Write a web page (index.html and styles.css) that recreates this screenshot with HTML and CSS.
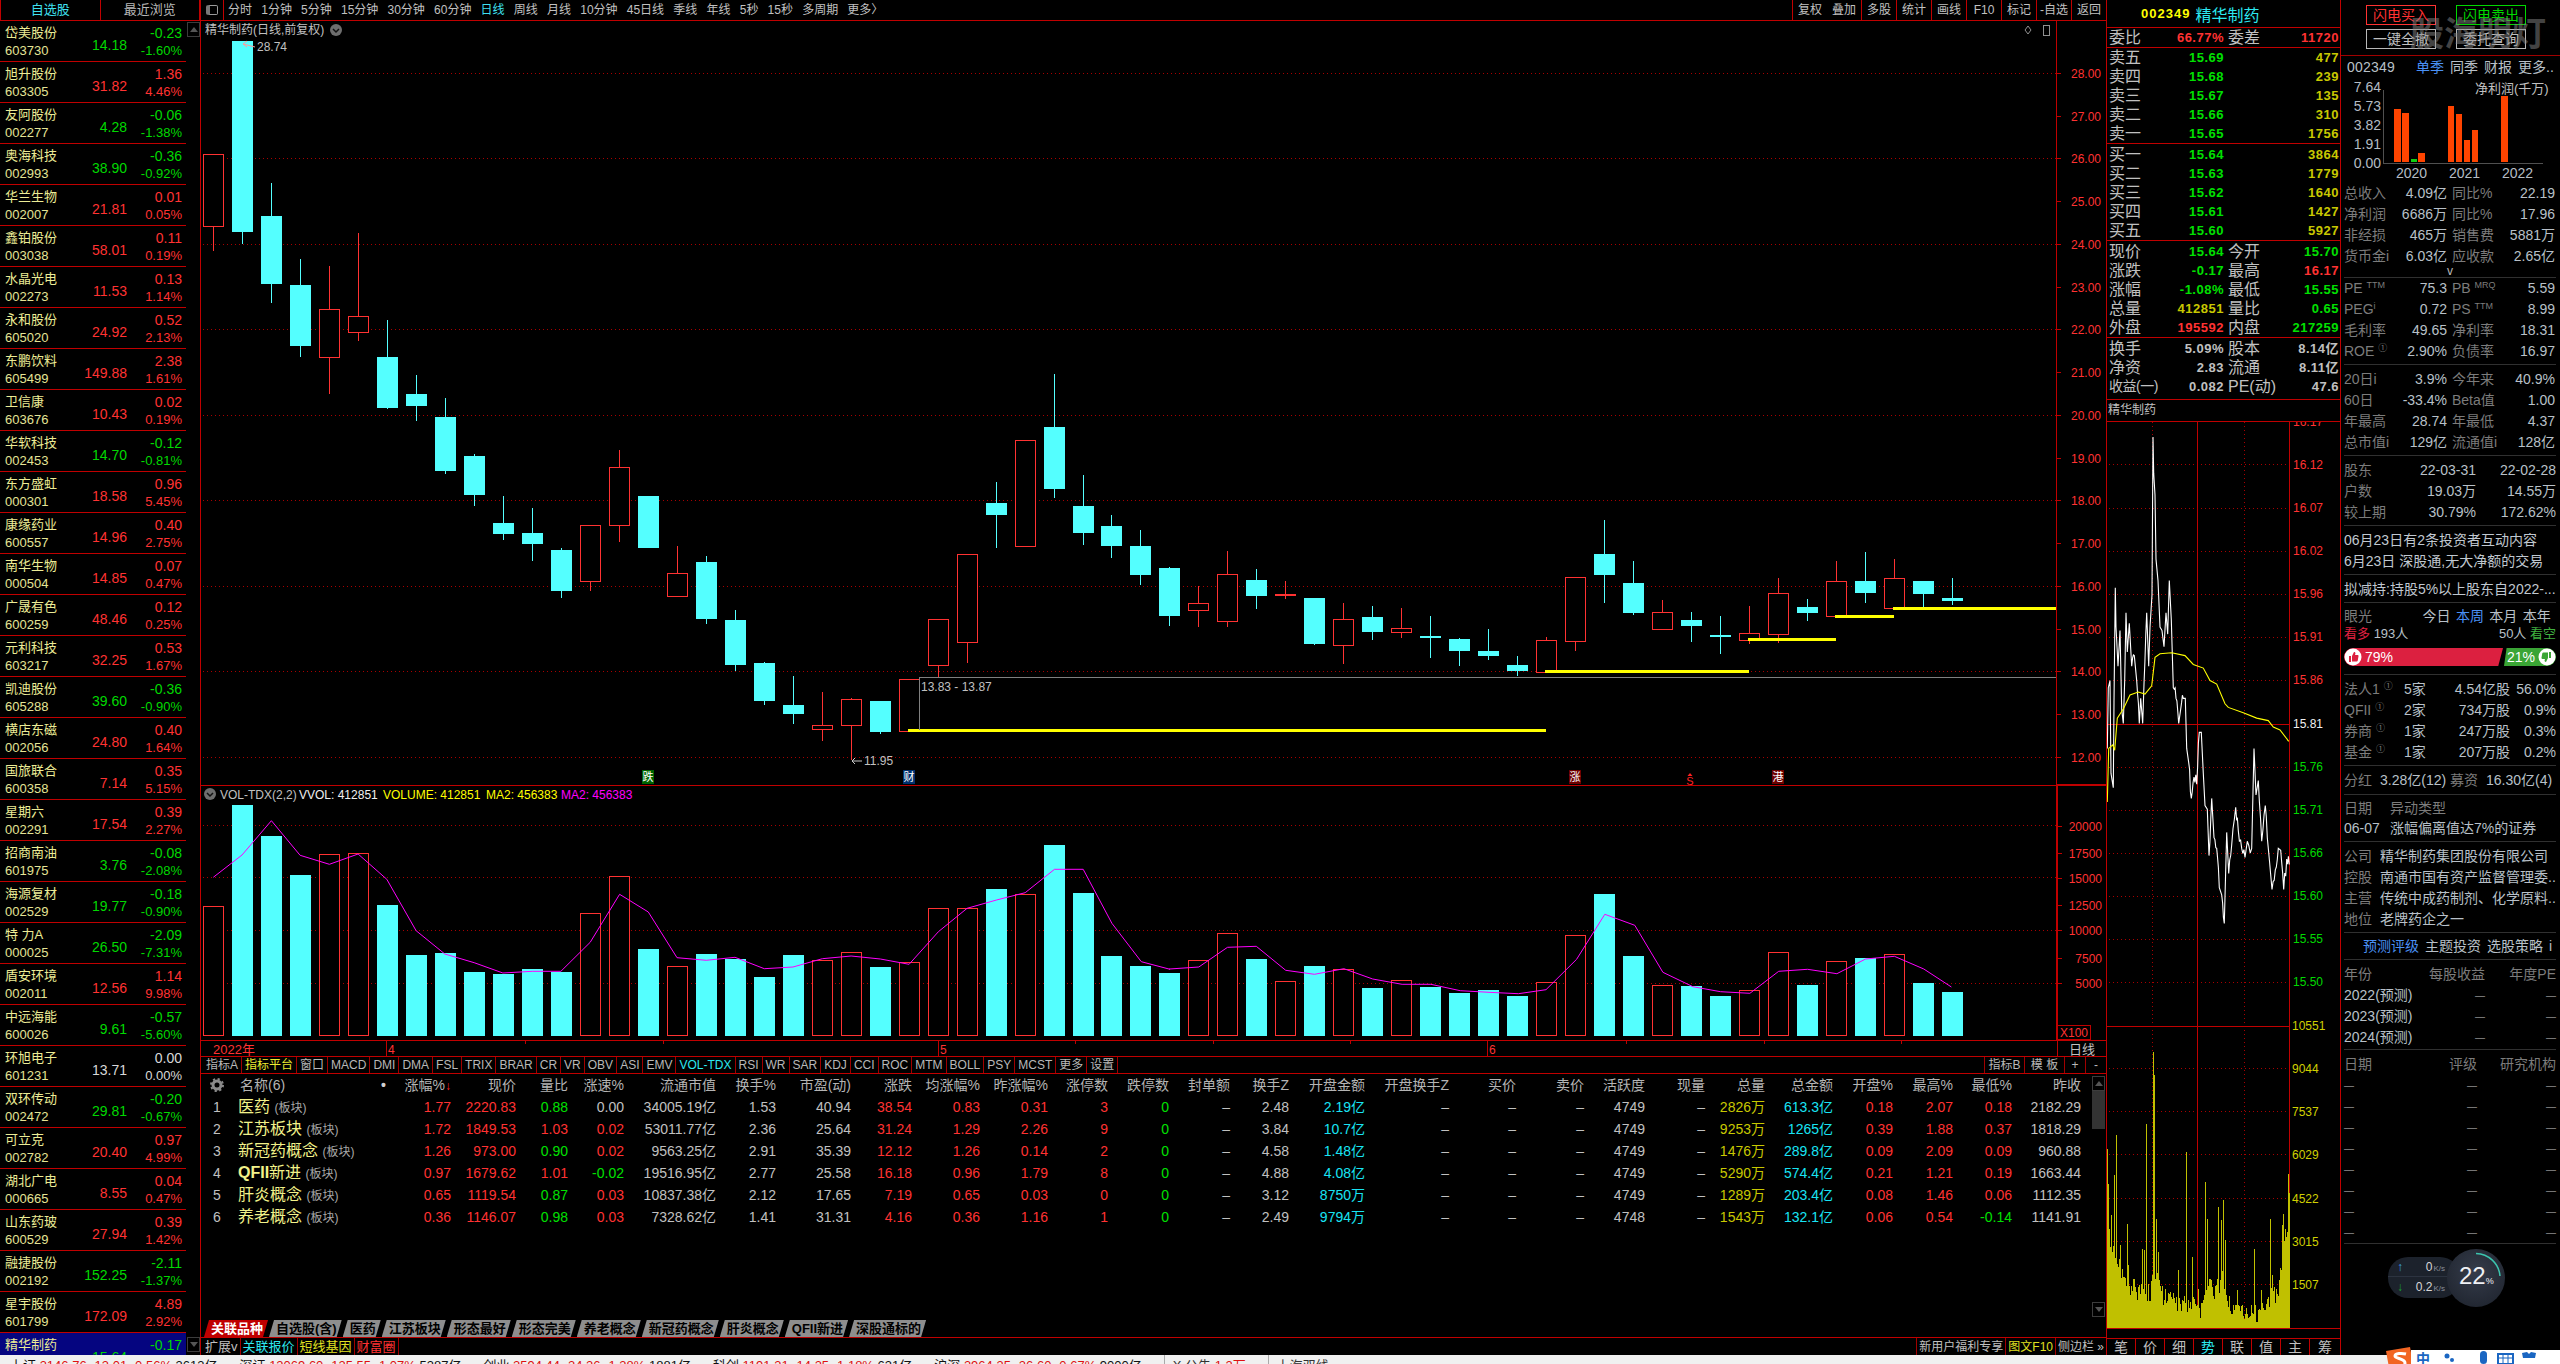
FILE: index.html
```html
<!DOCTYPE html>
<html lang="zh-CN">
<head>
<meta charset="utf-8">
<title>精华制药</title>
<link rel="stylesheet" href="styles.css">
</head>
<body>
<div class="workspace">

<aside class="watch">
  <div class="watch-tabs"><div class="wt on">自选股</div><div class="wt">最近浏览</div></div>
  <div class="watch-body">
    <div class="watch-list">
      <div class="wr dn"><b>岱美股份</b><i>14.18</i><u>-0.23</u><s>603730</s><em>-1.60%</em></div>
      <div class="wr up"><b>旭升股份</b><i>31.82</i><u>1.36</u><s>603305</s><em>4.46%</em></div>
      <div class="wr dn"><b>友阿股份</b><i>4.28</i><u>-0.06</u><s>002277</s><em>-1.38%</em></div>
      <div class="wr dn"><b>奥海科技</b><i>38.90</i><u>-0.36</u><s>002993</s><em>-0.92%</em></div>
      <div class="wr up"><b>华兰生物</b><i>21.81</i><u>0.01</u><s>002007</s><em>0.05%</em></div>
      <div class="wr up"><b>鑫铂股份</b><i>58.01</i><u>0.11</u><s>003038</s><em>0.19%</em></div>
      <div class="wr up"><b>水晶光电</b><i>11.53</i><u>0.13</u><s>002273</s><em>1.14%</em></div>
      <div class="wr up"><b>永和股份</b><i>24.92</i><u>0.52</u><s>605020</s><em>2.13%</em></div>
      <div class="wr up"><b>东鹏饮料</b><i>149.88</i><u>2.38</u><s>605499</s><em>1.61%</em></div>
      <div class="wr up"><b>卫信康</b><i>10.43</i><u>0.02</u><s>603676</s><em>0.19%</em></div>
      <div class="wr dn"><b>华软科技</b><i>14.70</i><u>-0.12</u><s>002453</s><em>-0.81%</em></div>
      <div class="wr up"><b>东方盛虹</b><i>18.58</i><u>0.96</u><s>000301</s><em>5.45%</em></div>
      <div class="wr up"><b>康缘药业</b><i>14.96</i><u>0.40</u><s>600557</s><em>2.75%</em></div>
      <div class="wr up"><b>南华生物</b><i>14.85</i><u>0.07</u><s>000504</s><em>0.47%</em></div>
      <div class="wr up"><b>广晟有色</b><i>48.46</i><u>0.12</u><s>600259</s><em>0.25%</em></div>
      <div class="wr up"><b>元利科技</b><i>32.25</i><u>0.53</u><s>603217</s><em>1.67%</em></div>
      <div class="wr dn"><b>凯迪股份</b><i>39.60</i><u>-0.36</u><s>605288</s><em>-0.90%</em></div>
      <div class="wr up"><b>横店东磁</b><i>24.80</i><u>0.40</u><s>002056</s><em>1.64%</em></div>
      <div class="wr up"><b>国旅联合</b><i>7.14</i><u>0.35</u><s>600358</s><em>5.15%</em></div>
      <div class="wr up"><b>星期六</b><i>17.54</i><u>0.39</u><s>002291</s><em>2.27%</em></div>
      <div class="wr dn"><b>招商南油</b><i>3.76</i><u>-0.08</u><s>601975</s><em>-2.08%</em></div>
      <div class="wr dn"><b>海源复材</b><i>19.77</i><u>-0.18</u><s>002529</s><em>-0.90%</em></div>
      <div class="wr dn"><b>特 力A</b><i>26.50</i><u>-2.09</u><s>000025</s><em>-7.31%</em></div>
      <div class="wr up"><b>盾安环境</b><i>12.56</i><u>1.14</u><s>002011</s><em>9.98%</em></div>
      <div class="wr dn"><b>中远海能</b><i>9.61</i><u>-0.57</u><s>600026</s><em>-5.60%</em></div>
      <div class="wr fl"><b>环旭电子</b><i>13.71</i><u>0.00</u><s>601231</s><em>0.00%</em></div>
      <div class="wr dn"><b>双环传动</b><i>29.81</i><u>-0.20</u><s>002472</s><em>-0.67%</em></div>
      <div class="wr up"><b>可立克</b><i>20.40</i><u>0.97</u><s>002782</s><em>4.99%</em></div>
      <div class="wr up"><b>湖北广电</b><i>8.55</i><u>0.04</u><s>000665</s><em>0.47%</em></div>
      <div class="wr up"><b>山东药玻</b><i>27.94</i><u>0.39</u><s>600529</s><em>1.42%</em></div>
      <div class="wr dn"><b>融捷股份</b><i>152.25</i><u>-2.11</u><s>002192</s><em>-1.37%</em></div>
      <div class="wr up"><b>星宇股份</b><i>172.09</i><u>4.89</u><s>601799</s><em>2.92%</em></div>
      <div class="wr dn sel"><b>精华制药</b><i>15.64</i><u>-0.17</u><s>002349</s><em>-1.08%</em></div>
    </div>
    <div class="vscroll"><span class="sb-btn"><span class="tri-up"></span></span><span class="sb-btn"><span class="tri-dn"></span></span></div>
  </div>
</aside>

<main class="center">
  <nav class="topbar">
    <span class="toggle"><span class="toggle-fill"></span></span>
    <div class="periods">
      <span>分时</span><span>1分钟</span><span>5分钟</span><span>15分钟</span><span>30分钟</span><span>60分钟</span><span class="act">日线</span><span>周线</span><span>月线</span><span>10分钟</span><span>45日线</span><span>季线</span><span>年线</span><span>5秒</span><span>15秒</span><span>多周期</span><span>更多〉</span>
    </div>
    <div class="top-tools">
      <span class="tool wide"><span>复权</span><span>叠加</span></span><span class="tool">多股</span><span class="tool">统计</span><span class="tool">画线</span><span class="tool">F10</span><span class="tool">标记</span><span class="tool">-自选</span><span class="tool">返回</span>
    </div>
  </nav>

  <svg id="mainChart" class="main-chart" viewBox="200 21 1906 1035" width="1906" height="1035"></svg>

  <div class="indbar">
    <div class="ind-left"><span>指标A</span><span class="yl">指标平台</span><span>窗口</span><span>MACD</span><span>DMI</span><span>DMA</span><span>FSL</span><span>TRIX</span><span>BRAR</span><span>CR</span><span>VR</span><span>OBV</span><span>ASI</span><span>EMV</span><span class="cy">VOL-TDX</span><span>RSI</span><span>WR</span><span>SAR</span><span>KDJ</span><span>CCI</span><span>ROC</span><span>MTM</span><span>BOLL</span><span>PSY</span><span>MCST</span><span>更多</span><span>设置</span></div>
    <div class="ind-right"><span>指标B</span><span>模 板</span><span class="sq">+</span><span class="sq">-</span></div>
  </div>

  <section class="board">
    <div class="grid-table">
      <span class="hd idx"><svg class="gear" viewBox="0 0 14 14" width="14" height="14"><circle cx="7" cy="7" r="4" fill="none" stroke="#8a8a8a" stroke-width="3"/><circle cx="7" cy="7" r="6" fill="none" stroke="#8a8a8a" stroke-width="2" stroke-dasharray="2.2 2.5"/></svg></span>
      <span class="hd nm">名称(6)<b class="dot">•</b></span>
      <span class="hd">涨幅%<b class="arrow">↓</b></span><span class="hd">现价</span><span class="hd">量比</span><span class="hd">涨速%</span><span class="hd">流通市值</span><span class="hd">换手%</span><span class="hd">市盈(动)</span><span class="hd">涨跌</span><span class="hd">均涨幅%</span><span class="hd">昨涨幅%</span><span class="hd">涨停数</span><span class="hd">跌停数</span><span class="hd">封单额</span><span class="hd">换手Z</span><span class="hd">开盘金额</span><span class="hd">开盘换手Z</span><span class="hd">买价</span><span class="hd">卖价</span><span class="hd">活跃度</span><span class="hd">现量</span><span class="hd">总量</span><span class="hd">总金额</span><span class="hd">开盘%</span><span class="hd">最高%</span><span class="hd">最低%</span><span class="hd">昨收</span>

      <span class="idx">1</span><span class="nm">医药 <small>(板块)</small></span><span class="r">1.77</span><span class="r">2220.83</span><span class="g">0.88</span><span>0.00</span><span>34005.19亿</span><span>1.53</span><span>40.94</span><span class="r">38.54</span><span class="r">0.83</span><span class="r">0.31</span><span class="r">3</span><span class="g">0</span><span>–</span><span>2.48</span><span class="c">2.19亿</span><span>–</span><span>–</span><span>–</span><span>4749</span><span>–</span><span class="y">2826万</span><span class="c">613.3亿</span><span class="r">0.18</span><span class="r">2.07</span><span class="r">0.18</span><span>2182.29</span>

      <span class="idx">2</span><span class="nm">江苏板块 <small>(板块)</small></span><span class="r">1.72</span><span class="r">1849.53</span><span class="r">1.03</span><span class="r">0.02</span><span>53011.77亿</span><span>2.36</span><span>25.64</span><span class="r">31.24</span><span class="r">1.29</span><span class="r">2.26</span><span class="r">9</span><span class="g">0</span><span>–</span><span>3.84</span><span class="c">10.7亿</span><span>–</span><span>–</span><span>–</span><span>4749</span><span>–</span><span class="y">9253万</span><span class="c">1265亿</span><span class="r">0.39</span><span class="r">1.88</span><span class="r">0.37</span><span>1818.29</span>

      <span class="idx">3</span><span class="nm">新冠药概念 <small>(板块)</small></span><span class="r">1.26</span><span class="r">973.00</span><span class="g">0.90</span><span class="r">0.02</span><span>9563.25亿</span><span>2.91</span><span>35.39</span><span class="r">12.12</span><span class="r">1.26</span><span class="r">0.14</span><span class="r">2</span><span class="g">0</span><span>–</span><span>4.58</span><span class="c">1.48亿</span><span>–</span><span>–</span><span>–</span><span>4749</span><span>–</span><span class="y">1476万</span><span class="c">289.8亿</span><span class="r">0.09</span><span class="r">2.09</span><span class="r">0.09</span><span>960.88</span>

      <span class="idx">4</span><span class="nm"><b>QFII</b>新进 <small>(板块)</small></span><span class="r">0.97</span><span class="r">1679.62</span><span class="r">1.01</span><span class="g">-0.02</span><span>19516.95亿</span><span>2.77</span><span>25.58</span><span class="r">16.18</span><span class="r">0.96</span><span class="r">1.79</span><span class="r">8</span><span class="g">0</span><span>–</span><span>4.88</span><span class="c">4.08亿</span><span>–</span><span>–</span><span>–</span><span>4749</span><span>–</span><span class="y">5290万</span><span class="c">574.4亿</span><span class="r">0.21</span><span class="r">1.21</span><span class="r">0.19</span><span>1663.44</span>

      <span class="idx">5</span><span class="nm">肝炎概念 <small>(板块)</small></span><span class="r">0.65</span><span class="r">1119.54</span><span class="g">0.87</span><span class="r">0.03</span><span>10837.38亿</span><span>2.12</span><span>17.65</span><span class="r">7.19</span><span class="r">0.65</span><span class="r">0.03</span><span class="r">0</span><span class="g">0</span><span>–</span><span>3.12</span><span class="c">8750万</span><span>–</span><span>–</span><span>–</span><span>4749</span><span>–</span><span class="y">1289万</span><span class="c">203.4亿</span><span class="r">0.08</span><span class="r">1.46</span><span class="r">0.06</span><span>1112.35</span>

      <span class="idx">6</span><span class="nm">养老概念 <small>(板块)</small></span><span class="r">0.36</span><span class="r">1146.07</span><span class="g">0.98</span><span class="r">0.03</span><span>7328.62亿</span><span>1.41</span><span>31.31</span><span class="r">4.16</span><span class="r">0.36</span><span class="r">1.16</span><span class="r">1</span><span class="g">0</span><span>–</span><span>2.49</span><span class="c">9794万</span><span>–</span><span>–</span><span>–</span><span>4748</span><span>–</span><span class="y">1543万</span><span class="c">132.1亿</span><span class="r">0.06</span><span class="r">0.54</span><span class="g">-0.14</span><span>1141.91</span>
    </div>
    <div class="board-scroll"><span class="sb-btn"><span class="tri-up"></span></span><span class="sb-thumb"></span><span class="sb-fill"></span><span class="sb-btn"><span class="tri-dn"></span></span></div>
  </section>

  <div class="sheets">
    <span class="sheet on">关联品种</span><span class="sheet">自选股(含)</span><span class="sheet">医药</span><span class="sheet">江苏板块</span><span class="sheet">形态最好</span><span class="sheet">形态完美</span><span class="sheet">养老概念</span><span class="sheet">新冠药概念</span><span class="sheet">肝炎概念</span><span class="sheet">QFII新进</span><span class="sheet">深股通标的</span>
  </div>

  <footer class="foot">
    <div class="foot-left"><span>扩展v</span><span class="cy">关联报价</span><span class="yl">短线基因</span><span class="rd">财富圈</span></div>
    <div class="foot-right"><span>新用户福利专享</span><span class="yl">图文F10</span><span>侧边栏 »</span></div>
  </footer>
</main>

<section class="quote">
  <div class="q-head"><b class="q-code">002349</b><span class="q-name">精华制药</span></div>
  <div class="q-block q-one">
    <div class="q-row"><span>委比</span><b class="r">66.77%</b><span class="l2">委差</span><b class="r">11720</b></div>
  </div>
  <div class="q-block">
    <div class="q-row"><span>卖五</span><b class="g">15.69</b><span></span><b class="y">477</b></div>
    <div class="q-row"><span>卖四</span><b class="g">15.68</b><span></span><b class="y">239</b></div>
    <div class="q-row"><span>卖三</span><b class="g">15.67</b><span></span><b class="y">135</b></div>
    <div class="q-row"><span>卖二</span><b class="g">15.66</b><span></span><b class="y">310</b></div>
    <div class="q-row"><span>卖一</span><b class="g">15.65</b><span></span><b class="y">1756</b></div>
  </div>
  <div class="q-block pad1">
    <div class="q-row"><span>买一</span><b class="g">15.64</b><span></span><b class="y">3864</b></div>
    <div class="q-row"><span>买二</span><b class="g">15.63</b><span></span><b class="y">1779</b></div>
    <div class="q-row"><span>买三</span><b class="g">15.62</b><span></span><b class="y">1640</b></div>
    <div class="q-row"><span>买四</span><b class="g">15.61</b><span></span><b class="y">1427</b></div>
    <div class="q-row"><span>买五</span><b class="g">15.60</b><span></span><b class="y">5927</b></div>
  </div>
  <div class="q-block pad1">
    <div class="q-row"><span>现价</span><b class="g">15.64</b><span class="l2">今开</span><b class="g">15.70</b></div>
    <div class="q-row"><span>涨跌</span><b class="g">-0.17</b><span class="l2">最高</span><b class="r">16.17</b></div>
    <div class="q-row"><span>涨幅</span><b class="g">-1.08%</b><span class="l2">最低</span><b class="g">15.55</b></div>
    <div class="q-row"><span>总量</span><b class="y">412851</b><span class="l2">量比</span><b class="g">0.65</b></div>
    <div class="q-row"><span>外盘</span><b class="r">195592</b><span class="l2">内盘</span><b class="g">217259</b></div>
  </div>
  <div class="q-block pad12">
    <div class="q-row"><span>换手</span><b class="w">5.09%</b><span class="l2">股本</span><b class="w">8.14亿</b></div>
    <div class="q-row"><span>净资</span><b class="w">2.83</b><span class="l2">流通</span><b class="w">8.11亿</b></div>
    <div class="q-row"><span class="narrow">收益(一)</span><b class="w">0.082</b><span class="l2">PE(动)</span><b class="w">47.6</b></div>
  </div>
  <div class="q-title">精华制药</div>
  <svg id="miniChart" class="mini-chart" viewBox="2107 420 233 906" width="233" height="906"></svg>
  <div class="q-blank"></div>
  <div class="q-tabs"><span>笔</span><span>价</span><span>细</span><span class="cy">势</span><span>联</span><span>值</span><span>主</span><span>筹</span></div>
</section>

<aside class="info">
  <div class="trade">
    <span class="btn b-red">闪电买入</span><span class="btn b-green">闪电卖出</span>
    <span class="btn">一键全撤</span><span class="btn">委托查询</span>
    <span class="watermark">股海明灯</span>
  </div>
  <div class="fin-head"><span class="fin-code">002349</span><span class="fin-tab on">单季</span><span class="fin-tab">同季</span><span class="fin-tab">财报</span><span class="fin-tab">更多..</span></div>
  <svg id="finChart" class="fin-chart" viewBox="2341 78 219 105" width="219" height="105"></svg>

  <div class="sec s-tight">
    <div class="i4"><span class="lb">总收入</span><span>4.09亿</span><span class="lb">同比%</span><span>22.19</span></div>
    <div class="i4"><span class="lb">净利润</span><span>6686万</span><span class="lb">同比%</span><span>17.96</span></div>
    <div class="i4"><span class="lb">非经损</span><span>465万</span><span class="lb">销售费</span><span>5881万</span></div>
    <div class="i4"><span class="lb">货币金i</span><span>6.03亿</span><span class="lb">应收款</span><span>2.65亿</span></div>
    <div class="more-v">v</div>
  </div>
  <div class="sec s-first">
    <div class="i4"><span class="lb">PE <sup>TTM</sup></span><span>75.3</span><span class="lb">PB <sup>MRQ</sup></span><span>5.59</span></div>
    <div class="i4"><span class="lb">PEG<sup>i</sup></span><span>0.72</span><span class="lb">PS <sup>TTM</sup></span><span>8.99</span></div>
    <div class="i4"><span class="lb">毛利率</span><span>49.65</span><span class="lb">净利率</span><span>18.31</span></div>
    <div class="i4"><span class="lb">ROE <sup>①</sup></span><span>2.90%</span><span class="lb">负债率</span><span>16.97</span></div>
  </div>
  <div class="sec">
    <div class="i4"><span class="lb">20日i</span><span>3.9%</span><span class="lb">今年来</span><span>40.9%</span></div>
    <div class="i4"><span class="lb">60日</span><span>-33.4%</span><span class="lb">Beta值</span><span>1.00</span></div>
    <div class="i4"><span class="lb">年最高</span><span>28.74</span><span class="lb">年最低</span><span>4.37</span></div>
    <div class="i4"><span class="lb">总市值i</span><span>129亿</span><span class="lb">流通值i</span><span>128亿</span></div>
  </div>
  <div class="sec">
    <div class="i3"><span class="lb">股东</span><span>22-03-31</span><span>22-02-28</span></div>
    <div class="i3"><span class="lb">户数</span><span>19.03万</span><span>14.55万</span></div>
    <div class="i3"><span class="lb">较上期</span><span>30.79%</span><span>172.62%</span></div>
  </div>
  <div class="sec">
    <div class="line">06月23日有2条投资者互动内容</div>
    <div class="line">6月23日 深股通,无大净额的交易</div>
  </div>
  <div class="sec"><div class="line">拟减持:持股5%以上股东自2022-...</div></div>
  <div class="sec s-eye">
    <div class="eye-tabs"><span class="lb">眼光</span><span class="et">今日</span><span class="et blue">本周</span><span class="et">本月</span><span class="et">本年</span></div>
    <div class="eye-count"><span><b class="rd">看多</b> 193人</span><span>50人 <b class="gn">看空</b></span></div>
    <div class="eye-bar">
      <div class="eb-red"><svg viewBox="0 0 18 18" width="18" height="18"><circle cx="9" cy="9" r="8.5" fill="#fff"/><path d="M5 8h2v6H5zM8 8l2-4c1 0 1.6.7 1.4 1.7L11 7h2.6c.6 0 1 .6.9 1.2l-.8 4.6c-.1.5-.5.8-1 .8H8z" fill="#dc2040"/></svg><span>79%</span></div>
      <div class="eb-green"><span>21%</span><svg viewBox="0 0 18 18" width="18" height="18"><circle cx="9" cy="9" r="8.5" fill="#fff"/><path d="M13 10h-2V4h2zM10 10l-2 4c-1 0-1.6-.7-1.4-1.7L7 11H4.400c-.6 0-1-.6-.9-1.200l.8-4.600c.1-.5.5-.8 1-.8H10z" fill="#3aa535"/></svg></div>
    </div>
  </div>
  <div class="sec">
    <div class="hold"><span class="lb">法人1 <sup>①</sup></span><span class="left">5家</span><span>4.54亿股</span><span>56.0%</span></div>
    <div class="hold"><span class="lb">QFII <sup>①</sup></span><span class="left">2家</span><span>734万股</span><span>0.9%</span></div>
    <div class="hold"><span class="lb">券商 <sup>①</sup></span><span class="left">1家</span><span>247万股</span><span>0.3%</span></div>
    <div class="hold"><span class="lb">基金 <sup>①</sup></span><span class="left">1家</span><span>207万股</span><span>0.2%</span></div>
  </div>
  <div class="sec s-div">
    <div class="div-row"><span class="lb">分红</span><span>3.28亿(12)</span><span class="lb">募资</span><span>16.30亿(4)</span></div>
  </div>
  <div class="sec s-move">
    <div class="move"><span class="lb">日期</span><span class="lb">异动类型</span></div>
    <div class="move"><span>06-07</span><span>涨幅偏离值达7%的证券</span></div>
  </div>
  <div class="sec">
    <div class="corp"><span class="lb">公司</span><span>精华制药集团股份有限公司</span></div>
    <div class="corp"><span class="lb">控股</span><span>南通市国有资产监督管理委..</span></div>
    <div class="corp"><span class="lb">主营</span><span>传统中成药制剂、化学原料..</span></div>
    <div class="corp"><span class="lb">地位</span><span>老牌药企之一</span></div>
  </div>
  <div class="sec s-links"><span class="blue">预测评级</span><span>主题投资</span><span>选股策略</span><span>i</span></div>
  <div class="sec s-year">
    <div class="yr"><span class="lb">年份</span><span class="lb">每股收益</span><span class="lb">年度PE</span></div>
    <div class="yr"><span>2022(预测)</span><span class="ds">—</span><span class="ds">—</span></div>
    <div class="yr"><span>2023(预测)</span><span class="ds">—</span><span class="ds">—</span></div>
    <div class="yr"><span>2024(预测)</span><span class="ds">—</span><span class="ds">—</span></div>
  </div>
  <div class="sec s-rate">
    <div class="rt head"><span class="lb">日期</span><span class="lb">评级</span><span class="lb">研究机构</span></div>
    <div class="rt"><span>—</span><span>—</span><span>—</span></div>
    <div class="rt"><span>—</span><span>—</span><span>—</span></div>
    <div class="rt"><span>—</span><span>—</span><span>—</span></div>
    <div class="rt"><span>—</span><span>—</span><span>—</span></div>
    <div class="rt"><span>—</span><span>—</span><span>—</span></div>
    <div class="rt"><span>—</span><span>—</span><span>—</span></div>
    <div class="rt"><span>—</span><span>—</span><span>—</span></div>
    <div class="rt"><span>—</span><span>—</span><span>—</span></div>
  </div>
  <div class="net">
    <div class="net-pill">
      <div class="net-row"><span class="up-a">↑</span><span class="net-v">0<small>K/s</small></span></div>
      <div class="net-row"><span class="dn-a">↓</span><span class="net-v">0.2<small>K/s</small></span></div>
    </div>
    <div class="net-dial">
      <svg viewBox="0 0 58 58" width="58" height="58"><path d="M29 4.500A24.500 24.500 0 0 1 53 27" fill="none" stroke="#3cc4ae" stroke-width="1.500"/></svg>
      <span class="dial-num">22<small>%</small></span>
    </div>
  </div>
</aside>
</div>

<div class="statusbar">
  <span>上证 <b>3146.76</b> <b>-13.01</b> <b>-0.56%</b> 3613亿</span>
  <span>深证 <b>12069.60</b> <b>-125.55</b> <b>-1.07%</b> 5387亿</span>
  <span>创业 <b>2594.44</b> <b>-24.26</b> <b>-1.28%</b> 1881亿</span>
  <span>科创 <b>1191.31</b> <b>-14.25</b> <b>-1.18%</b> 631亿</span>
  <span>沪深 <b>3964.35</b> <b>-26.60</b> <b>-0.67%</b> 9000亿</span>
  <span class="st-end">X 公告 <b>1.2万</b></span>
  <span class="st-end">上海双线</span>
</div>
<div class="ime">
  <svg class="ime-s" viewBox="0 0 32 30" width="32" height="30"><path d="M3 5l24-4 4 22-24 4z" fill="#f26522"/><path d="M23 8c-4-1-11-1-11 2s10 2 10 7-7 5-12 4" fill="none" stroke="#fff" stroke-width="3"/></svg>
  <div class="ime-bar">
    <span class="ime-zh">中</span>
    <svg viewBox="0 0 110 14" width="110" height="14"><circle cx="13" cy="6" r="2.500" fill="#1a66c2"/><circle cx="18" cy="10" r="2" fill="#1a66c2"/><rect x="46" y="1" width="7" height="13" rx="3.500" fill="#1a66c2"/><path d="M64 4h15v10H64z" fill="none" stroke="#1a66c2" stroke-width="2"/><path d="M64 8h15M69 4v10M74 4v10" stroke="#1a66c2"/><path d="M88 3l5-1 2 2 2-2 5 1-1 5h-12z" fill="#1a66c2"/></svg>
  </div>
</div>
<script src="chart.js"></script>
</body>
</html>
```

FILE: styles.css
```css
* { box-sizing: border-box; }
html, body { margin: 0; padding: 0; background: #000; }
body {
  width: 2560px; height: 1364px; overflow: hidden; position: relative;
  font-family: "Liberation Sans", "Noto Sans CJK SC", sans-serif;
  font-size: 12px; color: #c0c0c0;
}
b, i, u, s, em { font-style: normal; text-decoration: none; font-weight: normal; }

.workspace { display: flex; height: 1355px; overflow: hidden; }

/* watch list */
.watch { width: 200px; flex: none; display: flex; flex-direction: column; }
.watch-tabs { display: flex; height: 21px; border-bottom: 1px solid #c00000; border-left: 1px solid #c00000; flex: none; }
.wt { width: 99.500px; text-align: center; font-size: 13px; line-height: 20px; color: #b8b8b8; border-right: 1px solid #c00000; }
.wt.on { color: #3fe0f0; }
.watch-body { display: flex; flex: 1; min-height: 0; }
.watch-list { width: 186px; flex: none; }
.wr {
  height: 41px; padding: 3px 4px 3px 5px; border-bottom: 1px solid #c00000;
  display: grid; grid-template-columns: 1fr auto 55px; grid-template-rows: 18px 17px;
  grid-template-areas: "nm px ch" "cd px pc";
}
.wr b { grid-area: nm; font-size: 13px; line-height: 18px; color: #ecec96; }
.wr s { grid-area: cd; font-size: 13px; line-height: 17px; color: #e4e496; }
.wr i { grid-area: px; font-size: 14px; align-self: center; margin-top: 6px; text-align: right; }
.wr u { grid-area: ch; font-size: 14px; line-height: 18px; text-align: right; }
.wr em { grid-area: pc; font-size: 13px; line-height: 17px; text-align: right; }
.wr.up i, .wr.up u, .wr.up em { color: #ff3232; }
.wr.dn i, .wr.dn u, .wr.dn em { color: #00d800; }
.wr.fl i, .wr.fl u, .wr.fl em { color: #d8d8d8; }
.wr.sel { background: #050580; }
.vscroll { width: 14px; flex: none; display: flex; flex-direction: column; justify-content: space-between; padding: 1px 0 3px 1px; }
.sb-btn { width: 13px; height: 15px; border: 1px solid #3c3c3c; display: flex; align-items: center; justify-content: center; flex: none; }
.tri-up { border: 4px solid transparent; border-top: 0; border-bottom: 5px solid #555; }
.tri-dn { border: 4px solid transparent; border-bottom: 0; border-top: 5px solid #555; }

/* center */
.center { width: 1906px; flex: none; border-left: 1px solid #c00000; display: flex; flex-direction: column; }
.topbar { height: 21px; border-bottom: 1px solid #c00000; display: flex; align-items: stretch; flex: none; font-size: 12px; color: #c0c0c0; }
.toggle { width: 23px; border-right: 1px solid #c00000; display: flex; align-items: center; padding-left: 5px; flex: none; }
.toggle-fill { width: 12px; height: 10px; border: 1px solid #999; border-radius: 2px; border-left-width: 4px; border-left-color: #777; }
.periods { display: flex; gap: 9.200px; padding-left: 4px; line-height: 20px; }
.periods .act { color: #3fe0f0; }
.top-tools { margin-left: auto; display: flex; }
.tool { width: 35px; border-left: 1px solid #c00000; text-align: center; line-height: 20px; }
.tool.wide { width: 69px; display: flex; justify-content: space-around; }
.main-chart { display: block; flex: none; background: #000; }

/* svg classes */
.grid { stroke: #a80000; stroke-width: 1; stroke-dasharray: 1 3; shape-rendering: crispEdges; }
.axis { stroke: #c00000; stroke-width: 1; shape-rendering: crispEdges; fill: none; }
.axis2 { stroke: #c00000; stroke-width: 2; shape-rendering: crispEdges; }
.cr { fill: #000; stroke: #ff3232; stroke-width: 1; shape-rendering: crispEdges; }
.cc { fill: #54ffff; shape-rendering: crispEdges; }
.wr-r { stroke: #ff3232; shape-rendering: crispEdges; }
.wr-c { stroke: #54ffff; shape-rendering: crispEdges; }
.yl-line { stroke: #ffff00; stroke-width: 3; shape-rendering: crispEdges; }
.gy-line { stroke: #808080; fill: none; shape-rendering: crispEdges; }
.ma { stroke: #ff00ff; fill: none; stroke-width: 1; }
.t { font-family: "Liberation Sans", "Noto Sans CJK SC", sans-serif; font-size: 12px; fill: #c0c0c0; }
.t-title { font-size: 12px; }
.t-red { fill: #ff3232; }
.t-grn { fill: #00d800; }
.t-yl { fill: #d0d000; }
.t-yy { fill: #ffff00; }
.t-mg { fill: #ff00ff; }
.t-wh { fill: #f0f0f0; }
.t-lg { font-size: 13px; }
.pin { stroke: #ff9a9a; fill: none; }
.pin-g { stroke: #c8c8c8; fill: none; }
.mk-g { fill: #006400; } .mk-b { fill: #00306e; } .mk-r { fill: #6e0000; }
.mk-t { font-family: "Noto Sans CJK SC", sans-serif; font-size: 11px; fill: #fff; text-anchor: middle; }
.mk-rd { font-size: 11px; fill: #ff2020; text-anchor: middle; font-family: "Liberation Sans", sans-serif; }
.mk-tri { fill: #ff2020; }
.ico-c { fill: #6e6e6e; }
.ico-p { fill: none; stroke: #111; stroke-width: 1.500; }
.ico-box { fill: none; stroke: #909090; }
.line-w { stroke: #fff; stroke-width: 1.100; fill: none; }
.line-y { stroke: #ffff00; stroke-width: 1.100; fill: none; }
.vb { stroke: #c0c000; stroke-width: 1; shape-rendering: crispEdges; }
.fin-axis { stroke: #505050; shape-rendering: crispEdges; fill: none; }
.fb { fill: #ff4400; shape-rendering: crispEdges; }
.fb-g { fill: #10d010; shape-rendering: crispEdges; }
.t-fin { font-size: 14px; fill: #b4bcc4; }
.t-fin2 { font-size: 13px; fill: #c0c0c0; }

/* indicator bar */
.indbar { height: 18px; flex: none; border-top: 1px solid #c00000; border-bottom: 1px solid #c00000; display: flex; padding-left: 2px; line-height: 16px; color: #b8b8b8; }
.ind-left { display: flex; }
.ind-left span { padding: 0 3px; border-right: 1px solid #a00000; }
.ind-left .yl { color: #ecec30; }
.ind-left .cy, .foot .cy { color: #2ce8f0; }
.ind-right { margin-left: auto; display: flex; }
.ind-right span { padding: 0 2px; border-left: 1px solid #a00000; width: 40px; text-align: center; }
.ind-right .sq { width: 21px; padding: 0; }

/* table */
.board { height: 246px; flex: none; display: flex; }
.grid-table {
  width: 1891px; flex: none; display: grid; align-content: start;
  grid-template-columns: 31px 158px 61px 65px 52px 56px 92px 60px 75px 61px 68px 68px 60px 61px 61px 59px 76px 84px 67px 68px 61px 60px 60px 68px 60px 60px 59px 69px;
  grid-auto-rows: 22px; font-size: 14px; line-height: 22px; color: #c0c0c0;
}
.grid-table > span { text-align: right; white-space: nowrap; }
.grid-table .hd { height: 23px; line-height: 23px; color: #b4b4b4; }
.grid-table .idx { text-align: center; padding-left: 1px; }
.grid-table .nm { text-align: left; padding-left: 6px; font-size: 16px; color: #f2f28a; position: relative; }
.grid-table .hd.nm { font-size: 14px; padding-left: 8px; color: #b4b4b4; }
.grid-table .nm b { font-weight: bold; }
.grid-table .nm small { font-size: 12px; color: #a8a8a8; }
.dot { position: absolute; right: 4px; top: 0; font-weight: normal; color: #d0d0d0; }
.arrow { color: #ff2020; font-size: 12px; }
.gear { vertical-align: -2px; }
.r { color: #ff3232; } .g { color: #00e000; } .c { color: #18e4f4; } .y { color: #c8c800; }
.board-scroll { margin-left: auto; width: 14px; flex: none; display: flex; flex-direction: column; padding: 2px 1px 3px 0; }
.sb-thumb { height: 38px; background: #333; flex: none; }
.sb-fill { flex: 1; }

/* sheets */
.sheets { height: 18px; flex: none; border-bottom: 1px solid #c00000; display: flex; padding-left: 3px; gap: 0; }
.sheet {
  background: #8e8e8e; color: #000; font-size: 13px; font-weight: bold; line-height: 17px; height: 17px;
  padding: 0 5px 0 7px; margin-right: 1px; white-space: nowrap;
  clip-path: polygon(5px 0, 100% 0, calc(100% - 5px) 100%, 0 100%);
}
.sheet.on { background: #c00000; color: #fff; }
.foot { height: 18px; flex: 1; display: flex; line-height: 18px; padding-left: 2px; font-size: 13px; color: #c0c0c0; }
.foot-left { display: flex; }
.foot-left span { padding: 0 2px; border-right: 1px solid #a00000; white-space: nowrap; }
.foot .yl { color: #e0e020; }
.foot .rd { color: #ff3232; }
.foot-right { margin-left: auto; display: flex; font-size: 12px; }
.foot-right span { padding: 0 2px; border-left: 1px solid #a00000; white-space: nowrap; }

/* quote */
.quote { width: 235px; flex: none; border-left: 1px solid #c00000; border-right: 1px solid #c00000; display: flex; flex-direction: column; }
.q-head { height: 28px; flex: none; border-bottom: 1px solid #c00000; padding-left: 34px; display: flex; align-items: center; gap: 5px; }
.q-code { color: #ffff00; font-weight: bold; font-size: 13px; letter-spacing: 1px; }
.q-name { color: #2ce8f0; font-size: 16px; }
.q-block { flex: none; border-bottom: 1px solid #c00000; }
.q-one { height: 20px; }
.pad1 { padding-top: 1px; }
.pad12 { padding: 1px 0 3px; }
.q-row { display: grid; grid-template-columns: 32px 83px 40px 1fr; height: 19px; padding-left: 2px; padding-right: 1px; font-size: 16px; line-height: 19px; color: #c0c0c0; white-space: nowrap; }
.q-row b { text-align: right; font-weight: bold; font-size: 13px; letter-spacing: .5px; }
.q-row .l2 { padding-left: 4px; }
.q-row .w { color: #c0c0c0; }
.q-row .narrow { font-size: 14px; letter-spacing: -.5px; }
.q-title { height: 22px; flex: none; border-bottom: 1px solid #c00000; font-size: 12px; line-height: 21px; padding-left: 1px; color: #c0c0c0; }
.mini-chart { display: block; flex: none; }
.q-blank { height: 11px; flex: none; border-top: 1px solid #c00000; border-bottom: 1px solid #c00000; }
.q-tabs { height: 18px; flex: 1; display: flex; font-size: 14px; line-height: 17px; }
.q-tabs span { width: 29px; text-align: center; border-right: 1px solid #c00000; }
.q-tabs span:last-child { flex: 1; border-right: 0; }
.q-tabs .cy { color: #2ce8f0; }

/* info */
.info { width: 219px; flex: none; display: flex; flex-direction: column; padding: 0 4px 0 3px; font-size: 14px; color: #b8c0c8; position: relative; }
.trade { height: 56px; margin: 0 -4px 0 -3px; flex: none; border-bottom: 1px solid #a00000; padding: 5px 0 0 25px; display: grid; grid-template-columns: 70px 70px; grid-template-rows: 20px 20px; column-gap: 20px; row-gap: 4px; position: relative; }
.btn { border: 1px solid #b8b8b8; font-size: 14px; line-height: 18px; text-align: center; color: #c0c0c0; }
.b-red { border-color: #ff3232; color: #ff3232; }
.b-green { border-color: #00d800; color: #00d800; }
.watermark { position: absolute; left: 69px; top: 12px; font-size: 34px; font-weight: bold; line-height: 44px; color: rgba(135,135,135,.5); white-space: nowrap; z-index: 1; }
.fin-head { height: 22px; flex: none; display: flex; align-items: center; line-height: 22px; margin-left: 3px; }
.fin-code { width: 69px; letter-spacing: .2px; }
.fin-tab { width: 34px; white-space: nowrap; color: #b8c0c8; }
.fin-tab.on, .blue { color: #4a90f4; }
.fin-chart { display: block; flex: none; margin-left: -3px; }
.sec { flex: none; padding: 4px 0 2px; border-bottom: 1px solid #303030; }
.s-tight { padding-top: 0; padding-bottom: 0; }
.s-first { padding-top: 0; }
.lb { color: #7c7c7c; }
.lb sup { font-size: 9px; line-height: 0; vertical-align: 5px; }
.i4 { display: grid; grid-template-columns: 50px 53px 55px 53px; height: 21px; line-height: 21px; white-space: nowrap; }
.i4 > span:nth-child(even) { text-align: right; }
.i4 > span:nth-child(3) { padding-left: 5px; }
.more-v { height: 10px; line-height: 9px; text-align: center; font-size: 12px; color: #b8b8b8; }
.i3 { display: grid; grid-template-columns: 50px 82px 80px; height: 21px; line-height: 21px; }
.i3 > span:nth-child(n+2) { text-align: right; }
.line { height: 21px; line-height: 21px; white-space: nowrap; overflow: hidden; color: #c0c8d0; }
.s-eye { padding: 3px 0 8px; }
.eye-tabs { display: flex; height: 21px; line-height: 21px; }
.eye-tabs .lb { width: 80px; }
.et { width: 34px; }
.eye-count { display: flex; justify-content: space-between; height: 14px; line-height: 14px; font-size: 13px; }
.rd { color: #e02040; } .gn { color: #40b040; }
.eye-bar { display: flex; height: 18px; margin-top: 7px; color: #fff; font-size: 14px; line-height: 18px; gap: 1px; }
.eb-red { width: 159px; background: #dc2040; display: flex; gap: 3px; clip-path: polygon(0 0, 100% 0, 97% 100%, 0 100%); border-radius: 9px 0 0 9px; }
.eb-green { flex: 1; background: #3aa535; display: flex; justify-content: flex-end; gap: 3px; clip-path: polygon(5% 0, 100% 0, 100% 100%, 0 100%); border-radius: 0 9px 9px 0; }
.hold { display: grid; grid-template-columns: 60px 30px 76px 46px; height: 21px; line-height: 21px; white-space: nowrap; }
.hold > span { text-align: right; }
.hold .lb, .hold .left { text-align: left; }
.s-div { padding-bottom: 3px; }
.div-row { display: flex; height: 21px; line-height: 21px; white-space: nowrap; }
.div-row > span:nth-child(1) { width: 36px; }
.div-row > span:nth-child(2) { width: 70px; }
.div-row > span:nth-child(3) { width: 36px; }
.s-move { padding: 3px 0; }
.move { display: grid; grid-template-columns: 46px 1fr; height: 20px; line-height: 20px; white-space: nowrap; }
.corp { display: grid; grid-template-columns: 36px 1fr; height: 21px; line-height: 21px; white-space: nowrap; }
.s-links { padding: 3px 0 2px 19px; display: flex; gap: 6px; height: 27px; line-height: 21px; white-space: nowrap; }
.s-year { padding-bottom: 1px; }
.yr { display: grid; grid-template-columns: 1fr 70px 71px; height: 21px; line-height: 21px; white-space: nowrap; }
.yr > span:nth-child(n+2), .rt > span:nth-child(n+2) { text-align: right; }
.yr .ds { font-size: 10px; color: #909090; }
.rt { display: grid; grid-template-columns: 1fr 80px 79px; height: 21px; line-height: 21px; font-size: 10px; color: #909090; }
.rt.head { font-size: 14px; }
.s-rate { padding-bottom: 0; }
.net { position: relative; height: 58px; margin: 5px 0 0 44px; flex: none; width: 120px; }
.net-pill { position: absolute; left: 0; top: 8px; width: 72px; height: 41px; border-radius: 20px; background: #1c222c; font-size: 12px; color: #d8d8d8; }
.net-row { display: flex; justify-content: space-between; height: 20px; line-height: 20px; padding: 0 15px 0 9px; }
.net-row:first-child { border-bottom: 1px solid #2c3340; }
.net-v small { font-size: 8px; color: #8a8f98; margin-left: 1px; }
.up-a { color: #38a0e8; font-weight: bold; }
.dn-a { color: #18a030; font-weight: bold; }
.net-dial { position: absolute; left: 59px; top: 0; width: 58px; height: 58px; border-radius: 50%; background: radial-gradient(circle at 50% 40%, #353c4a, #1c212b); }
.net-dial svg { position: absolute; left: 0; top: 0; }
.dial-num { position: absolute; left: 12px; top: 12px; font-size: 24px; line-height: 30px; color: #eef0f4; }
.dial-num small { font-size: 9px; }

/* status bar */
.statusbar { height: 9px; background: #f0f0f0; display: flex; gap: 22px; overflow: hidden; padding-left: 10px; font-size: 13px; line-height: 22px; color: #111; white-space: nowrap; }
.statusbar b { color: #e01010; font-weight: normal; }
.st-end { color: #333; border-left: 1px solid #aaa; padding-left: 8px; }
.ime { position: absolute; left: 2383px; top: 1346px; width: 177px; height: 18px; overflow: hidden; }
.ime-s { position: absolute; left: 0; top: 0; }
.ime-bar { position: absolute; left: 28px; top: 4px; right: 0; bottom: 0; background: #fff; display: flex; gap: 4px; padding-left: 5px; color: #1a66c2; }
.ime-zh { font-size: 14px; font-weight: bold; line-height: 18px; }
```

FILE: chart.js
```js
(function () {
  var NS = 'http://www.w3.org/2000/svg';
  function add(svg, tag, attrs, text) {
    var e = document.createElementNS(NS, tag);
    for (var k in attrs) e.setAttribute(k, attrs[k]);
    if (text !== undefined) e.textContent = text;
    svg.appendChild(e);
    return e;
  }
  function line(svg, x1, y1, x2, y2, cls) {
    return add(svg, 'line', { x1: x1, y1: y1, x2: x2, y2: y2, 'class': cls });
  }
  function txt(svg, x, y, s, cls) {
    return add(svg, 'text', { x: x, y: y, 'class': 't ' + (cls || '') }, s);
  }

  /* ---------- main chart ---------- */
  var m = document.getElementById('mainChart');
  var Y9 = function (y) { return 20 + y / 1.96; };
  var Y10 = function (y) { return 300 + y / 2.904; };
  var CX = function (i) { return Math.round(212.4 + 28.97 * i); };
  var priceY = function (p) { return Math.round(73 + (28 - p) * 42.74); };

  // type, body top, body bottom, high, low  (in crop coordinates)
  var c9 = [
    ['r',262,403,null,453],['c',41,416,null,440],['c',384,518,319,554],['c',519,638,468,660],
    ['r',567,660,482,734],['r',581,612,417,630],['c',661,760,588,762],['c',733,756,696,785],
    ['c',778,884,741,889],['c',855,931,851,952],['c',986,1008,933,1020],['c',1005,1027,956,1061],
    ['c',1039,1120,1035,1132],['r',989,1099,null,1120],['r',877,989,843,1024],['c',933,1034,null,null],
    ['r',1083,1128,1031,null],['c',1062,1175,1051,1183],['c',1176,1265,1156,1275],['c',1260,1335,1258,1342],
    ['c',1343,1361,1286,1379],['r',1381,1389,1317,1414],['r',1330,1381,1328,1450],['c',1335,1395,null,1400],
    ['r',1291,1393,null,null],['r',1175,1265,null,1288],['r',1046,1220,null,1261],['c',947,971,906,1034],
    ['r',824,1030,null,null],['c',798,920,694,936]
  ];
  var c10 = [
    ['c',598,678,508,711],['c',656,713,624,749],['c',714,798,668,828],['c',778,919,775,947],
    ['r',881,899,830,950],['r',797,931,729,950],['c',813,861,781,897],['r',855,857,816,867],
    ['c',865,998,null,1002],['r',927,1001,880,1057],['c',920,963,889,987],['r',953,963,894,983],
    ['c',976,981,918,1040],['c',984,1019,981,1063],['c',1019,1033,955,1045],['c',1060,1077,1034,1092],
    ['r',988,1079,980,null],['r',805,989,null,1019],['c',738,798,639,880],['c',822,908,758,914],
    ['r',907,954,871,958],['c',929,946,906,993],['c',973,978,918,1028],['r',968,986,889,998],
    ['r',852,969,807,995],['c',891,908,868,932],['r',817,919,758,924],['c',816,851,732,880],
    ['r',808,895,752,null],['c',816,853,null,892],['c',865,874,807,886]
  ];
  var candles = c9.map(function (c) { return [c[0], Y9(c[1]), Y9(c[2]), c[3] === null ? null : Y9(c[3]), c[4] === null ? null : Y9(c[4])]; })
    .concat(c10.map(function (c) { return [c[0], Y10(c[1]), Y10(c[2]), c[3] === null ? null : Y10(c[3]), c[4] === null ? null : Y10(c[4])]; }));

  // price grid
  [28, 26, 24, 22, 20, 18, 16, 14, 12].forEach(function (p) {
    var y = priceY(p) + 0.5;
    line(m, 202, y, 2055, y, 'grid');
  });
  for (var p = 28; p >= 12; p--) {
    var py = priceY(p);
    line(m, 2055, py + 0.5, 2060, py + 0.5, 'axis');
    txt(m, 2070, py + 5, p.toFixed(2), 't-red');
  }
  // candles
  candles.forEach(function (c, i) {
    var x = CX(i), t = Math.round(c[1]), b = Math.round(c[2]);
    var cls = c[0] === 'r' ? 'wr-r' : 'wr-c';
    if (c[3] !== null) line(m, x + 0.5, Math.round(c[3]), x + 0.5, t, cls);
    if (c[4] !== null) line(m, x + 0.5, b, x + 0.5, Math.round(c[4]), cls);
    if (c[0] === 'r') add(m, 'rect', { x: x - 9.5, y: t + 0.5, width: 20, height: Math.max(b - t, 1), 'class': 'cr' });
    else add(m, 'rect', { x: x - 10, y: t, width: 21, height: Math.max(b - t, 2), 'class': 'cc' });
  });
  // yellow support lines
  [[907, 1545, 730], [1544, 1748, 671], [1747, 1835, 639], [1834, 1893, 616], [1892, 2055, 608]].forEach(function (l) {
    line(m, l[0], l[2] + 0.5, l[1], l[2] + 0.5, 'yl-line');
  });
  add(m, 'path', { d: 'M918.500 730V677.500H2055', 'class': 'gy-line' });
  txt(m, 920, 691, '13.83 - 13.87');
  // highest / lowest pins
  add(m, 'path', { d: 'M254 47L242 44M246 41l-4 3 4 3', 'class': 'pin' });
  txt(m, 256, 51, '28.74');
  add(m, 'path', { d: 'M861 761H851M854 758l-3 3 3 3', 'class': 'pin-g' });
  txt(m, 863, 765, '11.95');
  // event marks
  function mark(x, s, bg) {
    add(m, 'rect', { x: x - 6, y: 770, width: 12, height: 14, 'class': bg });
    add(m, 'text', { x: x, y: 781, 'class': 'mk-t' }, s);
  }
  mark(647, '跌', 'mk-g');
  mark(908, '财', 'mk-b');
  mark(1574, '涨', 'mk-r');
  mark(1777, '港', 'mk-r');
  add(m, 'path', { d: 'M1689 773l2.500 3h-5z', 'class': 'mk-tri' });
  add(m, 'text', { x: 1689, y: 785, 'class': 'mk-rd' }, 'S');
  // title row
  txt(m, 204, 34, '精华制药(日线,前复权)', 't-title');
  add(m, 'circle', { cx: 335, cy: 30, r: 6, 'class': 'ico-c' });
  add(m, 'path', { d: 'M332 29l3 3 3-3', 'class': 'ico-p' });
  add(m, 'path', { d: 'M2027 26l-3 4 3 4 3-4z', 'class': 'ico-box' });
  add(m, 'rect', { x: 2042.5, y: 25.5, width: 6, height: 10, 'class': 'ico-box' });
  // right axis frame
  line(m, 2055.5, 21, 2055.5, 785, 'axis');
  line(m, 200, 785.5, 2056, 785.5, 'axis');
  line(m, 2056, 785, 2106, 785, 'axis2');
  line(m, 2056, 785, 2056, 1040, 'axis2');

  // volume pane
  [825.5, 877.5, 930.5, 983.5].forEach(function (y) { line(m, 202, y, 2055, y, 'grid'); });
  [['20000', 826], ['17500', 853], ['15000', 878], ['12500', 905], ['10000', 930], ['7500', 958], ['5000', 983]].forEach(function (a) {
    line(m, 2056, a[1] + 0.5, 2061, a[1] + 0.5, 'axis');
    var t = txt(m, 2101, a[1] + 5, a[0], 't-red');
    t.setAttribute('text-anchor', 'end');
  });
  add(m, 'rect', { x: 2056.5, y: 1025.5, width: 33, height: 14, 'class': 'axis' });
  txt(m, 2059, 1037, 'X100', 't-red');

  var v1 = [379,75,168,285,223,220,375,525,519,576,582,567,576,400,289,507,559,522,537,591,525,541,517,561,547,385,385,327,343,195,339,528,558];
  var v2 = [564,526,445,522,589,543,552,609,586,606,624,615,633,592,451,327,513,601,603,633,616,502,600,529,519,508,594,621];
  var vols = v1.map(function (y) { return 780 + y / 3; }).concat(v2.map(function (y) { return 785 + y / 3; }));
  vols.forEach(function (y, i) {
    var x = CX(i), t = Math.round(y);
    if (candles[i][0] === 'r') add(m, 'rect', { x: x - 9.5, y: t + 0.5, width: 20, height: 1036 - t - 1, 'class': 'cr' });
    else add(m, 'rect', { x: x - 10, y: t, width: 21, height: 1036 - t, 'class': 'cc' });
  });
  var ma1 = [[35,292],[80,225],[126,122],[171,226],[217,253],[262,222],[307,298],[353,452],[398,522],[444,548],[489,579],[535,574],[580,574],[626,487],[672,343],[717,396],[762,533],[808,541],[853,532],[899,566],[944,561],[990,536],[1035,528],[1081,537],[1126,553],[1172,455],[1217,385],[1263,360],[1308,338],[1354,268],[1399,268],[1444,430],[1490,545],[1535,568]];
  var ma2 = [[30,552],[78,546],[125,487],[172,484],[220,556],[267,568],[315,551],[362,582],[410,598],[457,598],[505,617],[552,622],[600,626],[645,614],[695,523],[741,388],[790,421],[836,562],[885,605],[930,620],[978,625],[1025,559],[1072,553],[1120,566],[1167,522],[1214,514],[1262,552],[1307,606]];
  var pts = ma1.map(function (q) { return (190 + q[0] / 1.568).toFixed(1) + ',' + (780 + q[1] / 3).toFixed(1); })
    .concat(ma2.map(function (q) { return (1150 + q[0] / 1.633).toFixed(1) + ',' + (785 + q[1] / 3).toFixed(1); }));
  add(m, 'polyline', { points: pts.join(' '), 'class': 'ma' });

  // volume legend
  add(m, 'circle', { cx: 209, cy: 794, r: 6, 'class': 'ico-c' });
  add(m, 'path', { d: 'M206 793l3 3 3-3', 'class': 'ico-p' });
  txt(m, 219, 799, 'VOL-TDX(2,2)');
  txt(m, 298, 799, 'VVOL: 412851', 't-wh');
  txt(m, 382, 799, 'VOLUME: 412851', 't-yy');
  txt(m, 485, 799, 'MA2: 456383', 't-yy');
  txt(m, 560, 799, 'MA2: 456383', 't-mg');

  // date strip
  line(m, 200, 1040.5, 2106, 1040.5, 'axis');
  txt(m, 212, 1054, '2022年', 't-red t-lg');
  [[385, '4'], [937, '5'], [1486, '6']].forEach(function (d) {
    line(m, d[0] + 0.5, 1041, d[0] + 0.5, 1056, 'axis');
    txt(m, d[0] + 2, 1054, d[1], 't-red');
  });
  [524, 662, 1074, 1212, 1349, 1625, 1763, 1900].forEach(function (x) { line(m, x + 0.5, 1041, x + 0.5, 1044, 'axis'); });
  line(m, 2056.5, 1041, 2056.5, 1056, 'axis');
  txt(m, 2068, 1054, '日线', 't-lg');

  /* ---------- mini intraday chart ---------- */
  var q = document.getElementById('miniChart');
  var QX = function (x) { return 2090 + x / 3; };
  var QY = function (y) { return 450 + y / 2.8; };
  var QV = function (y) { return 1000 + y / 3; };

  [462, 506, 549, 592, 635, 678, 765, 808, 851, 894, 937, 980, 1066, 1109, 1152, 1196, 1239, 1282].forEach(function (y) {
    line(q, 2109, y + 0.5, 2289, y + 0.5, 'grid');
  });
  [2152, 2244].forEach(function (x) { line(q, x + 0.5, 420, x + 0.5, 1326, 'grid'); });
  line(q, 2197.5, 420, 2197.5, 1326, 'axis');
  line(q, 2289.5, 420, 2289.5, 1326, 'axis');
  line(q, 2107, 722.5, 2289, 722.5, 'axis');
  line(q, 2107, 1024.5, 2289, 1024.5, 'axis');

  [['16.17', 424, 't-red'], ['16.12', 467, 't-red'], ['16.07', 510, 't-red'], ['16.02', 553, 't-red'], ['15.96', 596, 't-red'], ['15.91', 639, 't-red'], ['15.86', 682, 't-red'], ['15.81', 726, 't-wh'], ['15.76', 769, 't-grn'], ['15.71', 812, 't-grn'], ['15.66', 855, 't-grn'], ['15.60', 898, 't-grn'], ['15.55', 941, 't-grn'], ['15.50', 984, 't-grn']].forEach(function (a) {
    txt(q, 2293, a[1], a[0], a[2]);
  });
  [['10551', 1028], ['9044', 1071], ['7537', 1114], ['6029', 1157], ['4522', 1201], ['3015', 1244], ['1507', 1287]].forEach(function (a) {
    txt(q, 2292, a[1], a[0], 't-yl');
  });

  // volume bars: envelope + deterministic jitter + recorded spikes
  var env = [[50,700],[70,750],[100,830],[130,860],[160,880],[180,870],[200,800],[215,880],[240,900],[270,905],[300,905],[330,930],[350,830],[370,880],[400,830],[420,920],[445,935],[480,930],[505,935],[530,890],[560,880],[572,800],[585,700],[595,700]];
  var spikes = { 52:440, 55:545, 58:680, 64:640, 73:520, 79:400, 86:770, 90:730, 97:800, 110:665, 115:790, 133:830, 155:740, 163:745, 169:365, 186:850, 190:150, 193:220, 198:650, 204:750, 226:860, 240:870, 265:805, 289:450, 305:765, 325:860, 346:540, 352:650, 360:830, 385:615, 393:655, 400:595, 406:715, 440:865, 493:740, 512:865, 541:650, 545:820, 570:810, 575:670, 578:637, 585:695 };
  function envAt(x) {
    for (var i = 1; i < env.length; i++) {
      if (x <= env[i][0]) {
        var a = env[i - 1], b = env[i];
        return a[1] + (b[1] - a[1]) * (x - a[0]) / (b[0] - a[0]);
      }
    }
    return 700;
  }
  var seed = 17;
  function rnd() { seed = (seed * 16807) % 2147483647; return (seed % 1000) / 1000; }
  for (var xf = 2107; xf <= 2287; xf++) {
    var xz = (xf - 2090) * 3;
    var top = envAt(xz) + (rnd() - 0.5) * 60;
    for (var s in spikes) { if (Math.abs(s - xz) < 1.6) top = Math.min(top, spikes[s]); }
    top = Math.min(top, 960);
    line(q, xf + 0.5, QV(top), xf + 0.5, 1326, 'vb');
  }
  line(q, 2288.5, QV(517), 2288.5, 1326, 'vb');
  line(q, 2289.5, QV(573), 2289.5, 1326, 'vb');

  // price and average lines
  var price = [[52,830],[55,660],[60,640],[63,900],[70,940],[72,700],[76,380],[78,490],[84,600],[90,500],[95,720],[100,760],[104,640],[108,450],[112,560],[118,480],[125,600],[133,570],[140,640],[148,760],[152,690],[158,760],[162,650],[170,450],[176,600],[180,490],[186,400],[189,-42],[191,60],[195,120],[198,300],[204,360],[210,490],[216,500],[222,545],[228,450],[233,510],[238,360],[244,470],[250,660],[258,690],[266,760],[272,720],[280,690],[286,690],[290,830],[296,870],[304,970],[312,910],[320,930],[328,785],[334,785],[340,900],[345,990],[352,1000],[357,1130],[365,970],[372,1080],[380,1110],[388,1220],[395,1240],[403,1320],[410,1065],[416,1180],[425,1100],[437,995],[445,1060],[455,1110],[465,1135],[472,1090],[485,1110],[492,830],[498,960],[505,920],[515,1090],[526,990],[535,1110],[546,1225],[556,1170],[565,1110],[572,1115],[581,1225],[590,1140],[598,1155]];
  var avg = [[52,980],[56,830],[68,820],[74,835],[82,745],[100,720],[120,680],[145,672],[165,678],[185,655],[195,575],[210,565],[245,562],[285,570],[310,595],[340,605],[360,640],[380,650],[405,705],[415,715],[460,730],[500,745],[535,752],[550,770],[570,778],[596,810]];
  // roughen the recorded price turning points with deterministic minute-level noise
  var rough = [];
  price.forEach(function (pt, i) {
    rough.push(pt);
    var nx = price[i + 1];
    if (!nx || nx[0] - pt[0] < 8) return;
    var steps = 2;
    for (var k = 1; k <= steps; k++) {
      var f = k / (steps + 1);
      rough.push([pt[0] + (nx[0] - pt[0]) * f, pt[1] + (nx[1] - pt[1]) * f + (rnd() - 0.5) * 40]);
    }
  });
  function toPts(a) { return a.map(function (p) { return QX(p[0]).toFixed(1) + ',' + QY(p[1]).toFixed(1); }).join(' '); }
  add(q, 'polyline', { points: toPts(rough), 'class': 'line-w' });
  add(q, 'polyline', { points: toPts(avg), 'class': 'line-y' });

  /* ---------- financial mini bars ---------- */
  var f = document.getElementById('finChart');
  [['7.64', 92], ['5.73', 111], ['3.82', 130], ['1.91', 149], ['0.00', 168]].forEach(function (a) {
    var t = txt(f, 2381, a[1], a[0], 't-fin');
    t.setAttribute('text-anchor', 'end');
  });
  add(f, 'path', { d: 'M2383.500 90V163.500H2543', 'class': 'fin-axis' });
  [[913,933,327],[937,957,340],[985,1005,459],[1073,1093,318],[1097,1117,342],[1121,1141,419],[1145,1165,391],[1233,1253,289]].forEach(function (b) {
    var x = 2090 + b[0] / 3, y = b[2] / 3;
    add(f, 'rect', { x: x, y: y, width: (b[1] - b[0]) / 3, height: 162 - y, 'class': 'fb' });
  });
  add(f, 'rect', { x: 2090 + 962 / 3, y: 159, width: 6, height: 3, 'class': 'fb-g' });
  [['2020', 2396], ['2021', 2449], ['2022', 2502]].forEach(function (a) { txt(f, a[1], 178, a[0], 't-fin'); });
  txt(f, 2475, 93, '净利润(千万)', 't-fin2');
})();
```
